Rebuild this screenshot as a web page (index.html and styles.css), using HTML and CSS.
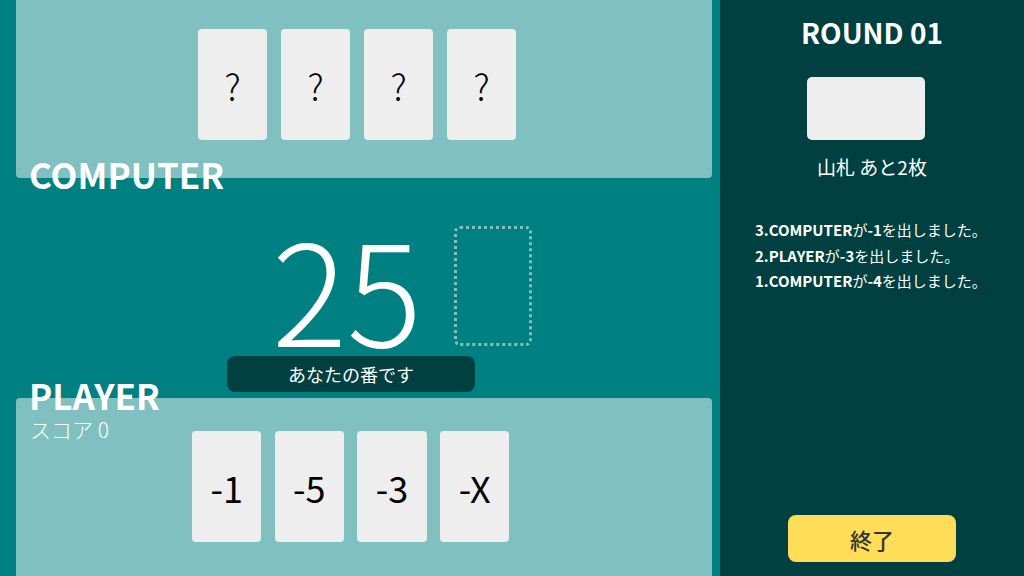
FILE: index.html
```html
<!DOCTYPE html>
<html lang="ja">
<head>
<meta charset="utf-8">
<title>Card Game</title>
<link rel="stylesheet" href="styles.css">
</head>
<body>
<div class="app">
  <main class="board">
    <section class="panel panel-top">
      <div class="hand hand-cpu">
        <div class="card">?</div>
        <div class="card">?</div>
        <div class="card">?</div>
        <div class="card">?</div>
      </div>
      <div class="label label-cpu">COMPUTER</div>
    </section>
    <section class="center">
      <div class="play-row">
        <div class="total">25</div>
        <div class="slot"></div>
      </div>
      <div class="turn">あなたの番です</div>
    </section>
    <section class="panel panel-bottom">
      <div class="label-group">
        <div class="label">PLAYER</div>
        <div class="score">スコア 0</div>
      </div>
      <div class="hand hand-player">
        <div class="card card-num">-1</div>
        <div class="card card-num">-5</div>
        <div class="card card-num">-3</div>
        <div class="card card-num">-X</div>
      </div>
    </section>
  </main>
  <aside class="side">
    <h1 class="round">ROUND 01</h1>
    <div class="deck"></div>
    <div class="deck-count">山札 あと2枚</div>
    <ul class="log">
      <li><b>3.COMPUTER</b>が<b>-1</b>を出しました。</li>
      <li><b>2.PLAYER</b>が<b>-3</b>を出しました。</li>
      <li><b>1.COMPUTER</b>が<b>-4</b>を出しました。</li>
    </ul>
    <button class="end">終了</button>
  </aside>
</div>
</body>
</html>
```

FILE: styles.css
```css
* { box-sizing: border-box; }
html, body {
  margin: 0;
  padding: 0;
  width: 1024px;
  height: 576px;
  overflow: hidden;
}
body {
  font-family: "Noto Sans CJK JP", "Noto Sans", sans-serif;
  background: #008080;
  color: #fff;
}
.app {
  display: flex;
  width: 1024px;
  height: 576px;
}
.board {
  width: 720px;
  display: flex;
  flex-direction: column;
}
.panel {
  margin-left: 16px;
  width: 696px;
  background: #80c0c0;
  position: relative;
}
.panel-top {
  height: 178px;
  border-radius: 0 0 4px 4px;
}
.panel-bottom {
  flex: 1;
  border-radius: 4px 4px 0 0;
}
.hand {
  display: flex;
}
.hand-cpu {
  padding: 29px 0 0 182px;
  gap: 14px;
}
.hand-player {
  padding: 33px 0 0 176px;
  gap: 13.4px;
}
.card {
  width: 69px;
  height: 111px;
  background: #eeeeee;
  border-radius: 4px;
  color: #000;
  font-size: 36px;
  font-weight: 300;
  display: flex;
  align-items: center;
  justify-content: center;
}
.hand-player .card {
  width: 69.3px;
  font-weight: 400;
}
.label {
  font-size: 35px;
  font-weight: 700;
  line-height: 35px;
  color: #fff;
}
.label-cpu {
  position: absolute;
  left: 13px;
  top: 156px;
}
.label-group {
  position: absolute;
  left: 13px;
  top: -21px;
}
.score {
  font-size: 21px;
  font-weight: 300;
  line-height: 24px;
  margin-top: 5px;
  padding-left: 1px;
}
.center {
  height: 220px;
  padding-top: 48px;
}
.play-row {
  display: flex;
  align-items: center;
  height: 120px;
}
.total {
  margin-left: 272px;
  font-size: 140px;
  font-weight: 300;
  line-height: 110px;
}
.slot {
  margin-left: 32px;
  width: 78px;
  height: 120px;
  border: 3px dotted #80c0c0;
  border-radius: 6px;
}
.turn {
  margin: 10px 0 0 227px;
  width: 248px;
  height: 36px;
  background: #004040;
  border-radius: 8px;
  font-size: 18px;
  line-height: 36px;
  text-align: center;
  color: #fff;
}
.side {
  width: 304px;
  background: #004040;
  display: flex;
  flex-direction: column;
  align-items: center;
}
.round {
  margin: 12px 0 0;
  font-size: 28px;
  font-weight: 700;
  line-height: 40px;
}
.deck {
  margin-top: 25px;
  margin-right: 12px;
  width: 118px;
  height: 63px;
  background: #eeeeee;
  border-radius: 5px;
}
.deck-count {
  margin-top: 13px;
  font-size: 19px;
  line-height: 28px;
}
.log {
  list-style: none;
  margin: 36px 0 0;
  padding: 0 0 0 35px;
  align-self: stretch;
  font-size: 15px;
  line-height: 25.5px;
}
.log b { font-weight: 700; }
.end {
  margin-top: auto;
  margin-bottom: 14px;
  width: 168px;
  height: 47px;
  border: none;
  border-radius: 8px;
  background: #ffdd57;
  color: #333;
  font-family: "Noto Sans CJK JP", sans-serif;
  font-size: 22px;
  font-weight: 500;
}
```
